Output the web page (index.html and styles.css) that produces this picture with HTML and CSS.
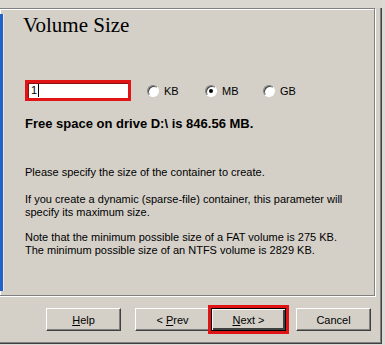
FILE: index.html
```html
<!DOCTYPE html>
<html lang="en">
<head>
    <meta charset="UTF-8">
    <title>Volume Size</title>
    <link rel="stylesheet" href="styles.css">
</head>
<body>
    <div class="window">
        <div class="topbar"></div>

        <div class="frame">
            <div class="side"></div>
            <div class="page">
                <h1>Volume Size</h1>

                <div class="size-row">
                    <div class="text-input"><span class="value">1</span><span class="caret"></span></div>
                    <div class="options">
                        <label class="option"><span class="radio"></span>KB</label>
                        <label class="option"><span class="radio checked"></span>MB</label>
                        <label class="option"><span class="radio"></span>GB</label>
                    </div>
                </div>

                <p class="free">Free space on drive D:\ is 846.56 MB.</p>

                <div class="info">
                    <p>Please specify the size of the container to create.</p>
                    <p>If you create a dynamic (sparse-file) container, this parameter will<br>specify its maximum size.</p>
                    <p class="note">Note that the minimum possible size of a FAT volume is 275 KB.<br>The minimum possible size of an NTFS volume is 2829 KB.</p>
                </div>
            </div>
        </div>

        <div class="buttons">
            <button class="btn help"><u>H</u>elp</button>
            <button class="btn prev">&lt; <u>P</u>rev</button>
            <button class="btn next default"><u>N</u>ext &gt;</button>
            <button class="btn cancel">Cancel</button>
        </div>
    </div>
</body>
</html>
```

FILE: styles.css
```css
:root {
    --face: #d4d0c8;
    --shadow: #808080;
    --dark: #404040;
    --light: #ffffff;
    --mark: #e01414;
}

* {
    margin: 0;
    padding: 0;
    box-sizing: border-box;
}

body {
    background-color: #dcdad4;
    font-family: "Liberation Sans", Arial, sans-serif;
    font-size: 11px;
    color: #000;
    overflow: hidden;
}

.window {
    width: 382px;
    height: 344px;
    background-color: var(--face);
    box-shadow: inset -1px -1px 0 var(--dark), inset -2px -2px 0 var(--shadow);
    overflow: hidden;
}

.topbar {
    height: 8px;
    background-color: #dad7d0;
}

.frame {
    display: flex;
    width: 376px;
    height: 288px;
    margin-left: -1px;
    border: 1px solid var(--shadow);
    box-shadow: 1px 1px 0 var(--light), inset 1px 1px 0 var(--light);
}

.side {
    width: 4px;
    margin: 5px 0 4px 0;
    background-color: #2463c6;
    border-right: 1px solid #e8e8f0;
}

.page {
    flex: 1;
    padding: 4px 0 0 21px;
}

h1 {
    margin-left: -2px;
    font-family: "Liberation Serif", "Times New Roman", serif;
    font-size: 21px;
    font-weight: normal;
    line-height: 24px;
}

.size-row {
    display: flex;
    align-items: center;
    margin-top: 43px;
}

.text-input {
    display: flex;
    align-items: center;
    width: 106px;
    height: 21px;
    padding-left: 3px;
    background-color: var(--light);
    border: 3px solid var(--mark);
    box-shadow: inset 1px 1px 0 #8c1010;
}

.text-input .value {
    font-size: 11px;
    line-height: 13px;
}

.caret {
    width: 1px;
    height: 13px;
    margin-left: 1px;
    background-color: #000;
}

.options {
    display: flex;
    margin-left: 16px;
}

.option {
    display: flex;
    align-items: center;
    width: 58px;
    gap: 5px;
}

.radio {
    position: relative;
    width: 12px;
    height: 12px;
    border-radius: 50%;
    background-color: var(--light);
    border: 1px solid;
    border-color: var(--shadow) var(--light) var(--light) var(--shadow);
    box-shadow: inset 1px 1px 0 var(--dark);
}

.radio.checked::after {
    content: "";
    position: absolute;
    left: 3px;
    top: 3px;
    width: 4px;
    height: 4px;
    border-radius: 50%;
    background-color: #000;
}

.free {
    margin-top: 15px;
    font-size: 13px;
    font-weight: bold;
    line-height: 15px;
}

.info {
    margin-top: 35px;
    line-height: 13px;
}

.info p {
    margin-bottom: 14px;
}

.info p.note {
    margin-top: -2px;
}

.buttons {
    display: flex;
    margin-top: 12px;
    padding-left: 46px;
}

.btn {
    width: 75px;
    height: 23px;
    font-family: "Liberation Sans", Arial, sans-serif;
    font-size: 11px;
    color: #000;
    background-color: var(--face);
    border: 1px solid;
    border-color: var(--light) var(--dark) var(--dark) var(--light);
    box-shadow: inset -1px -1px 0 var(--shadow);
}

.btn.prev {
    margin-left: 14px;
}

.btn.next {
    margin-left: 1px;
}

.btn.cancel {
    margin-left: 10px;
}

.btn.default {
    border-color: #000;
    box-shadow: inset 1px 1px 0 var(--light), inset -2px -2px 0 var(--dark), inset -1px -1px 0 var(--shadow);
    outline: 3px solid var(--mark);
}
```
